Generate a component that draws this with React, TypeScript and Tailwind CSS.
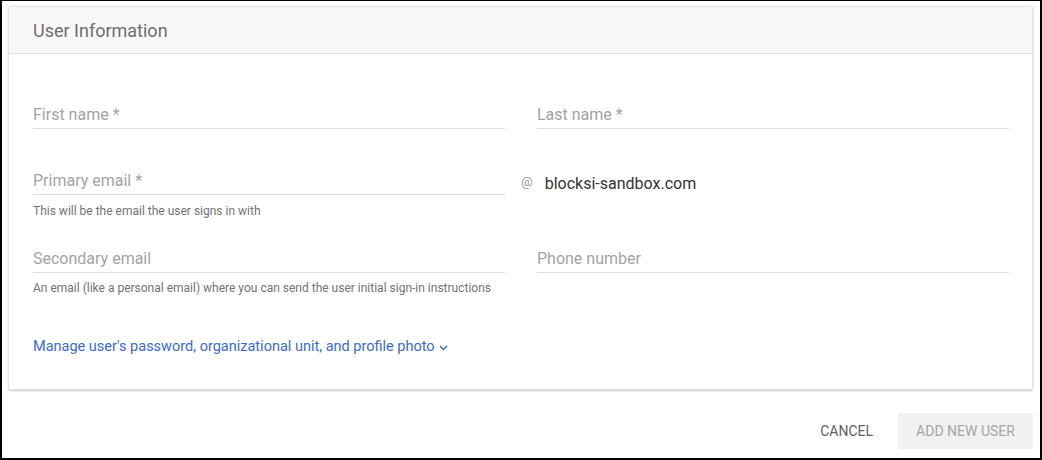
import React from "react";

function Field({ label, className = "" }: { label: string; className?: string }) {
  return (
    <div className={"border-b border-[#dcdcdc] h-[27px] pb-[1px] flex items-end " + className}>
      <span className="text-[16px] leading-[24px] text-[#a3a3a3]">{label}</span>
    </div>
  );
}

export default function App() {
  return (
    <div
      className="w-[1042px] h-[460px] bg-white border-l-2 border-r-2 border-b-2 border-t border-black flex flex-col overflow-hidden"
      style={{ fontFamily: "Roboto, 'Liberation Sans', sans-serif" }}
    >
      <div className="px-[6px] pt-[5px]">
        <div className="bg-white border border-[#e3e3e3] rounded-[2px] shadow-[0_1px_2px_rgba(0,0,0,0.22)] mr-[1px]">
          <div className="h-[47px] bg-[#f8f8f8] border-b border-[#e0e0e0] flex items-center pl-[24px] pt-[1px]">
            <span className="text-[18px] text-[#6e6e6e]">User Information</span>
          </div>
          <div className="pl-[24px] pr-[23px] pb-[32px]">
            <div className="grid grid-cols-2 gap-x-[32px] mt-[48px]">
              <Field label="First name *" />
              <Field label="Last name *" />
            </div>
            <div className="flex mt-[39px]">
              <div className="w-[472px]">
                <Field label="Primary email *" />
                <div className="text-[12px] leading-[14px] text-[#737373] mt-[9px]">
                  This will be the email the user signs in with
                </div>
              </div>
              <div className="flex items-end h-[27px] pb-[1px]">
                <span className="ml-[16px] text-[13px] text-[#9a9a9a] leading-[20px] mb-[2px]">@</span>
                <span className="ml-[12px] text-[16px] text-[#333] leading-[20px]">blocksi-sandbox.com</span>
              </div>
            </div>
            <div className="grid grid-cols-2 gap-x-[32px] mt-[28px]">
              <div>
                <Field label="Secondary email" />
                <div className="text-[12px] leading-[14px] text-[#737373] mt-[8px]">
                  An email (like a personal email) where you can send the user initial sign-in instructions
                </div>
              </div>
              <div>
                <Field label="Phone number" />
              </div>
            </div>
            <div className="mt-[42px] flex items-center text-[14.5px] leading-[20px] text-[#3b6ad2]">
              <span>Manage user's password, organizational unit, and profile photo</span>
              <svg className="ml-[4px] mt-[2px]" width="9" height="6" viewBox="0 0 9 6" fill="none">
                <path d="M1 1l3.5 3.5L8 1" stroke="#3b6ad2" strokeWidth="1.5" />
              </svg>
            </div>
          </div>
        </div>
      </div>
      <div className="flex justify-end items-center pr-[7px] mt-[23px]">
        <button className="h-[36px] px-[8px] text-[14px] text-[#5f5f5f] mr-[17px]">CANCEL</button>
        <button className="h-[36px] w-[135px] bg-[#f1f1f1] text-[14px] text-[#a6a6a6] rounded-[2px]">
          ADD NEW USER
        </button>
      </div>
    </div>
  );
}
